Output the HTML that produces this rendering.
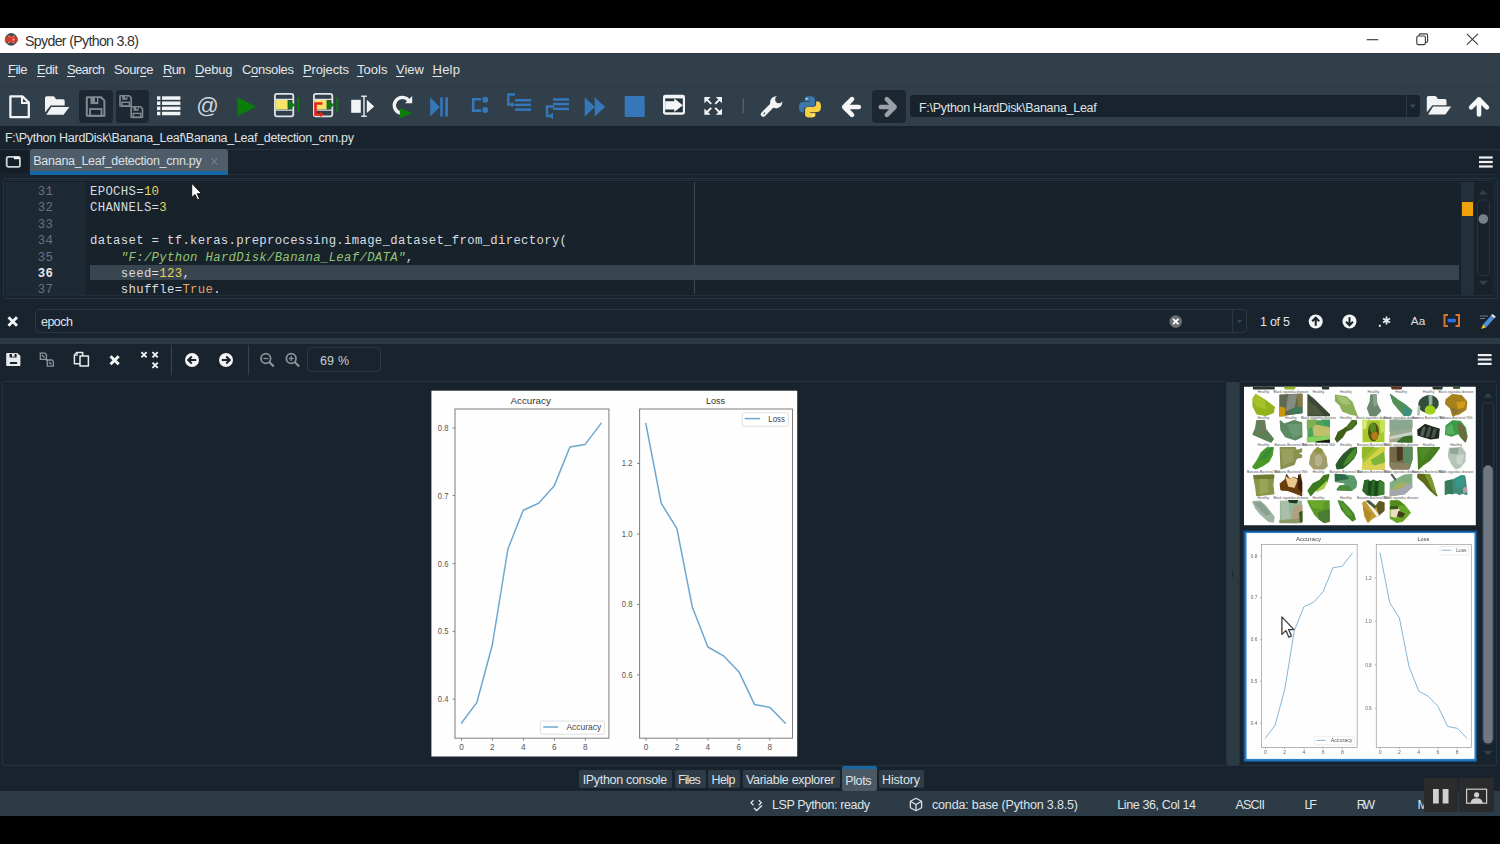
<!DOCTYPE html>
<html>
<head>
<meta charset="utf-8">
<title>Spyder (Python 3.8)</title>
<style>
*{box-sizing:border-box;margin:0;padding:0}
html,body{width:1500px;height:844px;overflow:hidden;background:#000}
body{font-family:"Liberation Sans",sans-serif;position:relative}
.b{position:absolute}
.tx{position:absolute;white-space:pre}
.tx u{text-decoration:underline;text-decoration-thickness:1px;text-underline-offset:1.5px}
.ln{position:absolute;left:20px;width:33px;text-align:right;font-family:"Liberation Mono",monospace;font-size:12.3px;line-height:16px;color:#66737e;white-space:pre;letter-spacing:0.2px}
.cl{position:absolute;left:90px;font-family:"Liberation Mono",monospace;font-size:12.3px;line-height:16px;white-space:pre;letter-spacing:0.319px}
#ov{position:absolute;left:0;top:0;width:1500px;height:844px}
</style>
</head>
<body>
<!-- window -->
<div class="b" style="left:0;top:28px;width:1500px;height:788px;background:#19232d"></div>
<div class="b" id="titlebar" style="left:0;top:28px;width:1500px;height:25.2px;background:#fff"></div>
<div class="b" id="menubar" style="left:0;top:53.2px;width:1500px;height:32.8px;background:#303f49;border-top:1.5px solid #2c3741"></div>
<div class="b" id="toolbar" style="left:0;top:86px;width:1500px;height:40px;background:#303f49;border-top:1px solid #2a3842"></div>
<!-- disabled btn backgrounds -->
<div class="b" style="left:79px;top:89.5px;width:33.5px;height:33.5px;background:#1c2731;border-radius:4px"></div>
<div class="b" style="left:115.5px;top:89.5px;width:33.5px;height:33.5px;background:#1c2731;border-radius:4px"></div>
<div class="b" style="left:872px;top:89.5px;width:34px;height:33.5px;background:#1c2731;border-radius:4px"></div>
<!-- cwd combobox -->
<div class="b" style="left:909.5px;top:94.5px;width:510px;height:22.5px;background:#19232d;border-radius:3px"></div>
<div class="b" style="left:1406px;top:95px;width:1px;height:21.5px;background:#2b3944"></div>
<!-- tab bar -->
<div class="b" style="left:0;top:148.5px;width:1500px;height:1px;background:#26333e"></div>
<div class="b" style="left:0;top:150px;width:28px;height:22.5px;background:#151e27;border-radius:4px"></div>
<div class="b" style="left:228px;top:173.500px;width:1270px;height:1px;background:#222e38"></div>
<div class="b" id="tab" style="left:29.600px;top:149px;width:198.700px;height:25.800px;background:#4e5d69;border-bottom:4.300px solid #1566a4;border-radius:3px 3px 0 0"></div>
<!-- editor -->
<div class="b" style="left:2.5px;top:177.5px;width:1495px;height:121px;border:1px solid #273540;border-radius:3px"></div>
<div class="b" style="left:5.5px;top:180px;width:1489px;height:116px;border:1px solid #212d38;border-radius:3px;background:#18222b"></div>
<div class="b" style="left:7px;top:181.5px;width:79px;height:113px;background:#1d2933"></div>
<div class="b" style="left:90px;top:264.5px;width:1368.5px;height:15.5px;background:#39454e"></div>
<div class="b" style="left:694px;top:182px;width:1px;height:112px;background:#3a4751"></div>
<div class="b" style="left:1460.5px;top:181.5px;width:13.5px;height:113px;background:#232f39"></div>
<div class="b" style="left:1462px;top:201.5px;width:11px;height:14px;background:#f0a20c"></div>
<div class="ln" style="top:183.7px;">31</div><div class="cl" style="top:183.7px"><span style="color:#d9dde0;">EPOCHS=</span><span style="color:#e6d35a;">10</span></div>
<div class="ln" style="top:200.1px;">32</div><div class="cl" style="top:200.1px"><span style="color:#d9dde0;">CHANNELS=</span><span style="color:#e6d35a;">3</span></div>
<div class="ln" style="top:216.6px;">33</div>
<div class="ln" style="top:233.0px;">34</div><div class="cl" style="top:233.0px"><span style="color:#d9dde0;">dataset = tf.keras.preprocessing.image_dataset_from_directory(</span></div>
<div class="ln" style="top:249.5px;">35</div><div class="cl" style="top:249.5px"><span style="color:#d9dde0;">    </span><span style="color:#93c572;font-style:italic;">"F:/Python HardDisk/Banana_Leaf/DATA"</span><span style="color:#d9dde0;">,</span></div>
<div class="ln" style="top:265.9px;color:#e4e7e9;font-weight:700;">36</div><div class="cl" style="top:265.9px"><span style="color:#d9dde0;">    seed=</span><span style="color:#e6d35a;">123</span><span style="color:#d9dde0;">,</span></div>
<div class="ln" style="top:282.4px;">37</div><div class="cl" style="top:282.4px"><span style="color:#d9dde0;">    shuffle=</span><span style="color:#e2a463;">True</span><span style="color:#d9dde0;">.</span></div>

<!-- find bar -->
<div class="b" style="left:34.5px;top:309px;width:1212.5px;height:24px;border:1px solid #2a3843;border-radius:4px;background:#19232d"></div>
<div class="b" style="left:1232px;top:310px;width:1px;height:22px;background:#2a3843"></div>
<!-- splitter -->
<div class="b" style="left:0;top:337.5px;width:1500px;height:6px;background:#2b3944"></div>
<!-- plots toolbar -->
<div class="b" style="left:306.5px;top:347.2px;width:74.3px;height:24.6px;border:1px solid #2a3843;border-radius:4px;background:#19232d"></div>
<div class="b" style="left:170.5px;top:345px;width:1px;height:30px;background:#34434e"></div>
<div class="b" style="left:247.5px;top:345px;width:1px;height:30px;background:#34434e"></div>
<!-- plot pane -->
<div class="b" style="left:1.5px;top:381px;width:1225.500px;height:384.5px;border:1px solid #26333e;border-radius:3px"></div>
<div class="b" style="left:1226.500px;top:382px;width:12px;height:383.500px;background:#2c3a44"></div>
<div class="b" style="left:1239px;top:381px;width:258px;height:384.5px;border:1px solid #26333e;border-radius:3px"></div>
<!-- bottom tabs -->
<div class="b" style="left:579px;top:769.5px;width:92.5px;height:18px;background:#2f3d48;border-radius:2px"></div>
<div class="b" style="left:674.5px;top:769.5px;width:31px;height:18px;background:#2f3d48;border-radius:2px"></div>
<div class="b" style="left:708px;top:769.5px;width:31.5px;height:18px;background:#2f3d48;border-radius:2px"></div>
<div class="b" style="left:742.5px;top:769.5px;width:97px;height:18px;background:#2f3d48;border-radius:2px"></div>
<div class="b" style="left:842px;top:766px;width:35px;height:25px;background:#4a5964;border-top:3px solid #1868a6;border-radius:2px"></div>
<div class="b" style="left:878.5px;top:769.5px;width:45.5px;height:18px;background:#2f3d48;border-radius:2px"></div>
<!-- status bar -->
<div class="b" id="statusbar" style="left:0;top:791px;width:1500px;height:25px;background:#2d3b46"></div>
<div class="tx" style="left:25.0px;top:33.98px;font-size:14.2px;line-height:14.2px;letter-spacing:-0.677px;color:#333333;font-family:'Liberation Sans';font-weight:400;font-style:normal">Spyder (Python 3.8)</div>
<div class="tx" style="left:8.0px;top:63.30px;font-size:13px;line-height:13px;letter-spacing:-0.484px;color:#e3e7ea;font-family:'Liberation Sans';font-weight:400;font-style:normal"><u>F</u>ile</div>
<div class="tx" style="left:37.0px;top:63.30px;font-size:13px;line-height:13px;letter-spacing:-0.469px;color:#e3e7ea;font-family:'Liberation Sans';font-weight:400;font-style:normal"><u>E</u>dit</div>
<div class="tx" style="left:67.0px;top:63.30px;font-size:13px;line-height:13px;letter-spacing:-0.641px;color:#e3e7ea;font-family:'Liberation Sans';font-weight:400;font-style:normal"><u>S</u>earch</div>
<div class="tx" style="left:114.0px;top:63.30px;font-size:13px;line-height:13px;letter-spacing:-0.341px;color:#e3e7ea;font-family:'Liberation Sans';font-weight:400;font-style:normal">Sour<u>c</u>e</div>
<div class="tx" style="left:163.0px;top:63.30px;font-size:13px;line-height:13px;letter-spacing:-0.680px;color:#e3e7ea;font-family:'Liberation Sans';font-weight:400;font-style:normal"><u>R</u>un</div>
<div class="tx" style="left:195.0px;top:63.30px;font-size:13px;line-height:13px;letter-spacing:-0.203px;color:#e3e7ea;font-family:'Liberation Sans';font-weight:400;font-style:normal"><u>D</u>ebug</div>
<div class="tx" style="left:242.0px;top:63.30px;font-size:13px;line-height:13px;letter-spacing:-0.315px;color:#e3e7ea;font-family:'Liberation Sans';font-weight:400;font-style:normal">C<u>o</u>nsoles</div>
<div class="tx" style="left:303.0px;top:63.30px;font-size:13px;line-height:13px;letter-spacing:-0.138px;color:#e3e7ea;font-family:'Liberation Sans';font-weight:400;font-style:normal"><u>P</u>rojects</div>
<div class="tx" style="left:357.0px;top:63.30px;font-size:13px;line-height:13px;letter-spacing:0.035px;color:#e3e7ea;font-family:'Liberation Sans';font-weight:400;font-style:normal"><u>T</u>ools</div>
<div class="tx" style="left:396.0px;top:63.30px;font-size:13px;line-height:13px;letter-spacing:0.016px;color:#e3e7ea;font-family:'Liberation Sans';font-weight:400;font-style:normal"><u>V</u>iew</div>
<div class="tx" style="left:432.5px;top:63.30px;font-size:13px;line-height:13px;letter-spacing:0.250px;color:#e3e7ea;font-family:'Liberation Sans';font-weight:400;font-style:normal"><u>H</u>elp</div>
<div class="tx" style="left:919.0px;top:101.72px;font-size:12.5px;line-height:12.5px;letter-spacing:-0.294px;color:#dfe3e6;font-family:'Liberation Sans';font-weight:400;font-style:normal">F:\Python HardDisk\Banana_Leaf</div>
<div class="tx" style="left:5.0px;top:132.12px;font-size:12.5px;line-height:12.5px;letter-spacing:-0.285px;color:#dfe3e6;font-family:'Liberation Sans';font-weight:400;font-style:normal">F:\Python HardDisk\Banana_Leaf\Banana_Leaf_detection_cnn.py</div>
<div class="tx" style="left:33.3px;top:155.02px;font-size:12.5px;line-height:12.5px;letter-spacing:-0.276px;color:#dde1e4;font-family:'Liberation Sans';font-weight:400;font-style:normal">Banana_Leaf_detection_cnn.py</div>
<div class="tx" style="left:41.0px;top:316.42px;font-size:12.5px;line-height:12.5px;letter-spacing:-0.516px;color:#dfe3e6;font-family:'Liberation Sans';font-weight:400;font-style:normal">epoch</div>
<div class="tx" style="left:1260.0px;top:316.32px;font-size:12.5px;line-height:12.5px;letter-spacing:-0.256px;color:#dfe3e6;font-family:'Liberation Sans';font-weight:400;font-style:normal">1 of 5</div>
<div class="tx" style="left:320.0px;top:355.42px;font-size:12.5px;line-height:12.5px;letter-spacing:0.167px;color:#c9ced2;font-family:'Liberation Sans';font-weight:400;font-style:normal">69 %</div>
<div class="tx" style="left:582.7px;top:773.52px;font-size:12.5px;line-height:12.5px;letter-spacing:-0.318px;color:#dfe3e6;font-family:'Liberation Sans';font-weight:400;font-style:normal">IPython console</div>
<div class="tx" style="left:677.9px;top:773.52px;font-size:12.5px;line-height:12.5px;letter-spacing:-0.877px;color:#dfe3e6;font-family:'Liberation Sans';font-weight:400;font-style:normal">Files</div>
<div class="tx" style="left:711.5px;top:773.52px;font-size:12.5px;line-height:12.5px;letter-spacing:-0.573px;color:#dfe3e6;font-family:'Liberation Sans';font-weight:400;font-style:normal">Help</div>
<div class="tx" style="left:746.0px;top:773.52px;font-size:12.5px;line-height:12.5px;letter-spacing:-0.305px;color:#dfe3e6;font-family:'Liberation Sans';font-weight:400;font-style:normal">Variable explorer</div>
<div class="tx" style="left:882.0px;top:773.52px;font-size:12.5px;line-height:12.5px;letter-spacing:-0.151px;color:#dfe3e6;font-family:'Liberation Sans';font-weight:400;font-style:normal">History</div>
<div class="tx" style="left:845.3px;top:774.82px;font-size:12.5px;line-height:12.5px;letter-spacing:-0.399px;color:#dfe3e6;font-family:'Liberation Sans';font-weight:400;font-style:normal">Plots</div>
<div class="tx" style="left:772.0px;top:798.62px;font-size:12.5px;line-height:12.5px;letter-spacing:-0.376px;color:#dfe3e6;font-family:'Liberation Sans';font-weight:400;font-style:normal">LSP Python: ready</div>
<div class="tx" style="left:932.0px;top:798.62px;font-size:12.5px;line-height:12.5px;letter-spacing:-0.164px;color:#dfe3e6;font-family:'Liberation Sans';font-weight:400;font-style:normal">conda: base (Python 3.8.5)</div>
<div class="tx" style="left:1117.3px;top:798.62px;font-size:12.5px;line-height:12.5px;letter-spacing:-0.385px;color:#dfe3e6;font-family:'Liberation Sans';font-weight:400;font-style:normal">Line 36, Col 14</div>
<div class="tx" style="left:1235.5px;top:798.62px;font-size:12.5px;line-height:12.5px;letter-spacing:-0.789px;color:#dfe3e6;font-family:'Liberation Sans';font-weight:400;font-style:normal">ASCII</div>
<div class="tx" style="left:1304.6px;top:798.62px;font-size:12.5px;line-height:12.5px;letter-spacing:-2.194px;color:#dfe3e6;font-family:'Liberation Sans';font-weight:400;font-style:normal">LF</div>
<div class="tx" style="left:1356.7px;top:798.62px;font-size:12.5px;line-height:12.5px;letter-spacing:-2.309px;color:#dfe3e6;font-family:'Liberation Sans';font-weight:400;font-style:normal">RW</div>
<div class="tx" style="left:1417.4px;top:798.62px;font-size:12.5px;line-height:12.5px;letter-spacing:-0.822px;color:#dfe3e6;font-family:'Liberation Sans';font-weight:400;font-style:normal">M</div>

<!-- recorder overlay -->
<div class="b" style="left:1423.5px;top:778px;width:34px;height:33.5px;background:#2a2b2c"></div>
<div class="b" style="left:1459px;top:778px;width:35px;height:33.5px;background:#2a2b2c"></div>
<svg id="ov" width="1500" height="844" viewBox="0 0 1500 844">
<g id="logo"><circle cx="11.2" cy="39.4" r="6.3" fill="#474c4f"/><path d="M5 37.2 Q11 34.2 17.6 37.4 L18 41 Q11.5 44.5 4.8 41.5Z" fill="#d23a2e"/><circle cx="13.4" cy="39.6" r="1.1" fill="#f6b0a6"/><path d="M8 35.5l2 2M14.5 35.3l-2 2M8 43.5l2-2M14.5 43.6l-2-2" stroke="#ddd" stroke-width=".8"/></g>
<g id="wincontrols" stroke="#3c3c3c" stroke-width="1.15" fill="none"><path d="M1366.7 39.7H1378.2"/><rect x="1416.8" y="36" width="8.6" height="8.6" rx="1.6"/><path d="M1419 36V35.3Q1419 33.9 1420.4 33.9H1426Q1427.6 33.9 1427.6 35.5V41Q1427.6 42.4 1426.2 42.4H1425.4"/><path d="M1466.9 33.9L1477.9 44.7M1477.9 33.9L1466.9 44.7"/></g>
<path d="M10.4 96.3H22.4L28.8 102.6V117.2H10.4Z" fill="none" stroke="#f1f3f4" stroke-width="2.3" stroke-linejoin="round"/><path d="M22 96.5V103H28.6" fill="none" stroke="#f1f3f4" stroke-width="2"/>
<path d="M45 98Q45 96.3 46.7 96.3H53Q54.2 96.3 54.9 97.4L56 99.3H63Q64.7 99.3 64.7 101V105.5H50.6L45 112.5Z" fill="#f1f3f4"/><path d="M46.3 114.8L51.3 106.9H69.4L63.6 114.8Z" fill="#f1f3f4"/>
<path d="M86.8 97.3H101.1L104.4 100.6V115.8H86.8Z" fill="none" stroke="#7f8a92" stroke-width="2.0" stroke-linejoin="round"/><rect x="90.5" y="97.3" width="7.8" height="6.8" fill="#7f8a92"/><rect x="95.0" y="97.9" width="2.0" height="4.1" fill="#1c2731"/><rect x="90.1" y="109.0" width="11.4" height="7.0" fill="none" stroke="#7f8a92" stroke-width="1.8"/>
<path d="M120.0 95.8H129.2L131.2 97.8V106.0H120.0Z" fill="none" stroke="#7f8a92" stroke-width="1.6" stroke-linejoin="round"/><rect x="122.3" y="95.8" width="5.1" height="3.9" fill="#7f8a92"/><rect x="125.2" y="95.9" width="1.3" height="2.4" fill="#1c2731"/><rect x="122.0" y="102.3" width="7.4" height="4.0" fill="none" stroke="#7f8a92" stroke-width="1.4"/>
<path d="M131.2 106.8H140.5L142.5 108.8V117.2H131.2Z" fill="none" stroke="#7f8a92" stroke-width="1.6" stroke-linejoin="round"/><rect x="133.5" y="106.8" width="5.2" height="4.0" fill="#7f8a92"/><rect x="136.5" y="107.0" width="1.3" height="2.4" fill="#1c2731"/><rect x="133.2" y="113.4" width="7.5" height="4.1" fill="none" stroke="#7f8a92" stroke-width="1.4"/>
<rect x="157" y="96.30" width="3.4" height="3.5" fill="#f1f3f4"/><rect x="162" y="96.30" width="18.4" height="3.5" fill="#f1f3f4"/>
<rect x="157" y="101.45" width="3.4" height="3.5" fill="#f1f3f4"/><rect x="162" y="101.45" width="18.4" height="3.5" fill="#f1f3f4"/>
<rect x="157" y="106.60" width="3.4" height="3.5" fill="#f1f3f4"/><rect x="162" y="106.60" width="18.4" height="3.5" fill="#f1f3f4"/>
<rect x="157" y="111.75" width="3.4" height="3.5" fill="#f1f3f4"/><rect x="162" y="111.75" width="18.4" height="3.5" fill="#f1f3f4"/>
<text x="196.2" y="113.3" font-family="Liberation Sans" font-size="22.5" fill="#cfd6da" textLength="22.5" lengthAdjust="spacingAndGlyphs">@</text>
<path d="M237.5 97V116.3L256 106.7Z" fill="#0b7d0b"/>
<rect x="274.9" y="93.9" width="18.4" height="22.4" rx="2" fill="none" stroke="#dfe3e6" stroke-width="1.8"/><path d="M275.0 99.300H293.0M275.0 110.200H293.0" stroke="#dfe3e6" stroke-width="1.200"/><rect x="275.8" y="100" width="11.8" height="9.3" fill="#f5e56a"/><path d="M288.3 100V110L295.5 105Z" fill="#0b7d0b"/><rect x="297.3" y="97.5" width="1.8" height="15" fill="#0b7d0b"/>
<rect x="313.9" y="93.9" width="18.4" height="22.4" rx="2" fill="none" stroke="#dfe3e6" stroke-width="1.8"/><path d="M314.0 99.300H332.0M314.0 110.200H332.0" stroke="#dfe3e6" stroke-width="1.200"/><rect x="314.8" y="100" width="11.8" height="9.3" fill="#f5e56a"/><path d="M327.3 100V110L334.5 105Z" fill="#0b7d0b"/><rect x="336.3" y="97.5" width="1.8" height="15" fill="#0b7d0b"/>
<path d="M322.5 103.5H315.5V114.5H321.5" fill="none" stroke="#f0231a" stroke-width="2.6"/><path d="M320.5 111.5L323.5 114.5L320.5 117.5Z" fill="#f0231a"/>
<rect x="351.2" y="99.8" width="9.6" height="13" fill="#f1f3f4"/><path d="M364 96.3H361.2M364 96.3H366.8M364 96.3V116.3M361.2 116.3H366.8" stroke="#dfe3e6" stroke-width="1.5" fill="none"/><path d="M366.8 99.8V113L374.2 106.4Z" fill="#f1f3f4"/>
<path d="M400.5 113.2A8 8 0 1 1 409.2 101.3" fill="none" stroke="#f1f3f4" stroke-width="3.400"/><path d="M405 103.2H412.2V96Z" fill="#f1f3f4"/><path d="M399.8 108V118.3L412.8 113.2Z" fill="#0b7d0b"/>
<path d="M430.2 97.3V116.5L439.8 106.9Z" fill="#3577b8"/><rect x="440.2" y="97.3" width="2.6" height="19.2" fill="#3577b8"/><rect x="445.2" y="97.3" width="2.8" height="19.2" fill="#3577b8"/>
<path d="M481 99.2H473.2V110.6H481" fill="none" stroke="#3577b8" stroke-width="2.6"/><circle cx="485.3" cy="99.8" r="3" fill="#3577b8"/><circle cx="485.3" cy="110" r="3" fill="#3577b8"/>
<path d="M515 94.5H508.3V104.5H513" fill="none" stroke="#3577b8" stroke-width="2.4"/><path d="M511.5 101.5L515 104.5L511.5 107.5Z" fill="#3577b8"/>
<rect x="515" y="99" width="16" height="2.5" fill="#3577b8"/>
<rect x="515" y="103.6" width="16" height="2.5" fill="#3577b8"/>
<rect x="515" y="108.4" width="16" height="2.5" fill="#3577b8"/>
<path d="M554 106.5H547V116H552" fill="none" stroke="#3577b8" stroke-width="2.4"/><path d="M551 112.5L546.8 116L551 119.2Z" fill="#3577b8" transform="translate(2,0)"/>
<rect x="553" y="98.2" width="16" height="2.5" fill="#3577b8"/>
<rect x="553" y="102.8" width="16" height="2.5" fill="#3577b8"/>
<rect x="553" y="107.6" width="16" height="2.5" fill="#3577b8"/>
<path d="M584.7 97.2V116.6L595 106.9ZM594.7 97.2V116.6L605.2 106.9Z" fill="#3577b8"/>
<rect x="624.7" y="96" width="20" height="21" rx="1" fill="#3577b8"/>
<rect x="663" y="94.7" width="22" height="20" rx="2.4" fill="#f2f4f5"/><rect x="665.2" y="98.4" width="17.6" height="13.900" fill="#26343e"/><path d="M665.2 101.200H674.300V98.600L682.800 105.350L674.300 112.100V109.500H665.2Z" fill="#f6f7f8"/>
<path d="M704.4 97.1H710.6L704.4 103.3Z" fill="#f1f3f4"/><path d="M711.2 103.9L706.9 99.6" stroke="#f1f3f4" stroke-width="2"/>
<path d="M722.0 97.1H715.8L722.0 103.3Z" fill="#f1f3f4"/><path d="M715.2 103.9L719.5 99.6" stroke="#f1f3f4" stroke-width="2"/>
<path d="M704.4 114.7H710.6L704.4 108.5Z" fill="#f1f3f4"/><path d="M711.2 107.9L706.9 112.2" stroke="#f1f3f4" stroke-width="2"/>
<path d="M722.0 114.7H715.8L722.0 108.5Z" fill="#f1f3f4"/><path d="M715.2 107.9L719.5 112.2" stroke="#f1f3f4" stroke-width="2"/>
<rect x="742.6" y="98.5" width="1.2" height="14.5" fill="#5a6873"/>
<path d="M763.300 114.200L773.500 104" stroke="#f1f3f4" stroke-width="5" stroke-linecap="round"/><circle cx="776.200" cy="102.300" r="6.100" fill="#f1f3f4"/><circle cx="778.900" cy="99.500" r="3.700" fill="#303f49"/><circle cx="764.300" cy="113.300" r="0.850" fill="#303f49"/>
<g id="py"><path d="M809.6 96.3c-5.4 0-5 2.3-5 2.3v2.6h5.2v.8h-7.3s-3.5-.4-3.5 5.1 3 5.3 3 5.3h1.9v-2.6s-.1-3 3-3h5.100c0 0 2.900 0 2.900-2.800v-4.800s.4-2.900-5.300-2.900z" fill="#3b77a9"/><circle cx="806.7" cy="98.700" r=".95" fill="#dfe9f0"/><path d="M810.4 117.600c5.400 0 5-2.300 5-2.300v-2.600h-5.200v-.8h7.300s3.500.4 3.500-5.100-3-5.300-3-5.300h-1.900v2.600s.1 3-3 3h-5.100s-2.900 0-2.900 2.800v4.800s-.4 2.900 5.300 2.900z" fill="#f6cf46"/><circle cx="813.3" cy="115.200" r=".95" fill="#fdf5d6"/></g>
<path d="M858.800 107H844.200M852 99.200L844.200 107L852 114.800" fill="none" stroke="#f6f7f8" stroke-width="4.600" stroke-linecap="round" stroke-linejoin="round"/>
<path d="M880.800 107H894.600M886.800 99.200L894.600 107L886.800 114.800" fill="none" stroke="#9ba1a6" stroke-width="4.600" stroke-linecap="round" stroke-linejoin="round"/>
<path d="M1409.700 104.500h6.200l-3.100 3.600z" fill="#3d4b56"/>
<g transform="translate(1381.8,-0.3)"><path d="M45 98Q45 96.3 46.7 96.3H53Q54.2 96.3 54.9 97.400L56 99.300H63Q64.700 99.300 64.700 101V105.500H50.600L45 112.500Z" fill="#f1f3f4"/><path d="M46.300 114.800L51.300 106.900H69.400L63.600 114.800Z" fill="#f1f3f4"/></g>
<path d="M1479 114.400V99.400M1471.100 107.300L1479 99.400L1486.900 107.300" fill="none" stroke="#f6f7f8" stroke-width="4.600" stroke-linecap="round" stroke-linejoin="round"/>
<rect x="6.700" y="156.900" width="13.200" height="10" rx="1.600" fill="none" stroke="#cdd4d9" stroke-width="1.800"/><rect x="13.900" y="156.900" width="5.800" height="2.300" fill="#f4f6f7"/>
<path d="M211.300 158.200L217.300 164.800M217.300 158.200L211.300 164.800" stroke="#6f7e89" stroke-width="1.200"/>
<rect x="1479" y="156.4" width="13.700" height="2.200" fill="#eef0f2"/>
<rect x="1479" y="160.9" width="13.700" height="2.200" fill="#eef0f2"/>
<rect x="1479" y="165.4" width="13.700" height="2.200" fill="#eef0f2"/>
<path d="M1478.800 194.500L1483.200 190L1487.600 194.500Z" fill="#33414c"/><path d="M1478.800 280.800L1483.200 285.300L1487.600 280.800Z" fill="#33414c"/>
<rect x="1477.300" y="199.800" width="12" height="76" rx="5" fill="none" stroke="#2b3843" stroke-width="1"/>
<circle cx="1483.300" cy="219" r="4.800" fill="#76818a"/>
<path d="M191.7 183.2L191.7 197.6L195.0 194.5L197.5 199.9L199.6 199.0L197.2 193.7L201.7 193.7Z" fill="#fff" stroke="#111" stroke-width="1.0" stroke-linejoin="round"/>
<path d="M8.500 317.200L17 325.700M17 317.200L8.500 325.700" stroke="#f2f4f5" stroke-width="2.900"/>
<circle cx="1175.700" cy="321.500" r="6.300" fill="#6a6f73"/><path d="M1173 318.800L1178.400 324.200M1178.400 318.800L1173 324.200" stroke="#fff" stroke-width="1.700"/>
<path d="M1236.700 320h5.600l-2.800 3.200z" fill="#35434e"/>
<circle cx="1315.7" cy="321.5" r="7.0" fill="#f4f5f6"/><path d="M1315.7 325.7V318.2M1312.2 321.3L1315.7 317.7L1319.2 321.3" stroke="#19232d" stroke-width="2" fill="none"/>
<circle cx="1349.5" cy="321.5" r="7.0" fill="#f4f5f6"/><path d="M1349.5 317.3V324.8M1346.0 321.7L1349.5 325.3L1353.0 321.7" stroke="#19232d" stroke-width="2" fill="none"/>
<rect x="1378.800" y="324.800" width="2" height="2" fill="#e8ebed"/><path d="M1386.500 316.500V324.500M1383 318.500L1390 322.500M1390 318.500L1383 322.500" stroke="#e8ebed" stroke-width="1.700"/>
<text x="1410.800" y="325.200" font-family="Liberation Sans" font-size="11.500" fill="#dfe3e6" textLength="14.400" lengthAdjust="spacingAndGlyphs">Aa</text>
<path d="M1448 315H1444.500V326H1448M1455.500 315H1459V326H1455.500" fill="none" stroke="#d9742f" stroke-width="2"/><rect x="1447.500" y="318.700" width="8.500" height="3.600" rx="1" fill="#2f6fe0"/>
<g><path d="M1480 316h8M1480 318.500h5" stroke="#6d7a85" stroke-width="1"/><path d="M1483 324.500L1491 315.500L1494.300 318.300L1486.300 327.300Z" fill="#4f8fdc"/><path d="M1483 324.500L1486.300 327.300L1481.200 329Z" fill="#f2c230"/><path d="M1491 315.500L1492.500 314L1495.800 316.800L1494.300 318.300Z" fill="#e9eef2"/></g>
<path d="M6.200 353.800Q6.200 353 7 353H17.300L20.400 356.100V365.300Q20.400 366.100 19.600 366.100H7Q6.200 366.100 6.200 365.300Z" fill="#e8ebed"/><rect x="9.600" y="353.900" width="7" height="3.600" fill="#19232d"/><rect x="12" y="353.900" width="2.600" height="2.800" fill="#e8ebed"/><rect x="9.800" y="362" width="7.400" height="1.900" rx=".6" fill="#19232d"/>
<g fill="none" stroke="#8a949b" stroke-width="1.300"><path d="M40.300 353.100H45L46.400 354.500V359.300H40.300Z"/><path d="M47.300 360H52L53.400 361.400V366.200H47.300Z"/><path d="M42 355l2.500 2.500M49 362l2.500 2.500"/></g><path d="M45.500 358.500L48 361" stroke="#8a949b" stroke-width="1.800"/>
<path d="M77 352.400H82.700V363.700H74.400V355Z" fill="#19232d" stroke="#e8ebed" stroke-width="1.500" stroke-linejoin="round"/><path d="M77.200 352.600V355.200H74.600" fill="none" stroke="#e8ebed" stroke-width="1.100"/><rect x="80" y="356" width="8.400" height="10" fill="#19232d" stroke="#e8ebed" stroke-width="1.500" stroke-linejoin="round"/>
<path d="M110.500 356.200L118.700 364.200M118.700 356.200L110.500 364.200" stroke="#f2f4f5" stroke-width="3"/>
<path d="M141.4 352.2L146.6 357.40000000000003M146.6 352.2L141.4 357.40000000000003" stroke="#f2f4f5" stroke-width="1.900"/>
<path d="M152.5 352.2L157.7 357.40000000000003M157.7 352.2L152.5 357.40000000000003" stroke="#f2f4f5" stroke-width="1.900"/>
<path d="M152.5 362.7L157.7 367.90000000000003M157.7 362.7L152.5 367.90000000000003" stroke="#f2f4f5" stroke-width="1.900"/>
<circle cx="192" cy="360" r="7.0" fill="#f4f5f6"/><path d="M196.2 360H188.7M191.8 356.5L188.2 360L191.8 363.5" stroke="#19232d" stroke-width="2" fill="none"/>
<circle cx="226" cy="360" r="7.0" fill="#f4f5f6"/><path d="M221.8 360H229.3M226.2 356.5L229.8 360L226.2 363.5" stroke="#19232d" stroke-width="2" fill="none"/>
<circle cx="265.8" cy="358.5" r="4.800" fill="none" stroke="#8a949b" stroke-width="1.700"/><path d="M269.3 362.0L273.8 366.5" stroke="#8a949b" stroke-width="2.200"/><path d="M263.40000000000003 358.5H268.2" stroke="#8a949b" stroke-width="1.300"/>
<circle cx="291.2" cy="358.5" r="4.800" fill="none" stroke="#8a949b" stroke-width="1.700"/><path d="M294.7 362.0L299.2 366.5" stroke="#8a949b" stroke-width="2.200"/><path d="M288.8 358.5H293.59999999999997" stroke="#8a949b" stroke-width="1.300"/><path d="M291.2 356.1V360.9" stroke="#8a949b" stroke-width="1.300"/>
<rect x="1477.800" y="354.0" width="13.800" height="2.200" fill="#eef0f2"/>
<rect x="1477.800" y="358.4" width="13.800" height="2.200" fill="#eef0f2"/>
<rect x="1477.800" y="362.8" width="13.800" height="2.200" fill="#eef0f2"/>
<path d="M753.500 800.300L751 802.800L753.500 805.300M758.800 800.300L761.300 802.800L758.800 805.300" fill="none" stroke="#dfe3e6" stroke-width="1.300"/><path d="M754 808L756.600 810.600L762 805.600" fill="none" stroke="#dfe3e6" stroke-width="1.400"/>
<g fill="none" stroke="#dfe3e6" stroke-width="1.300" stroke-linejoin="round"><path d="M916 798.300L921.600 801.300V807.700L916 810.700L910.400 807.700V801.300Z"/><path d="M910.600 801.500L916 804.500L921.400 801.500M916 804.500V810.500"/></g>
<rect x="1433" y="789" width="5.800" height="14.500" fill="#cfcfcf"/><rect x="1442.700" y="789" width="5.800" height="14.500" fill="#cfcfcf"/>
<rect x="1466.600" y="789.200" width="20" height="14" fill="none" stroke="#cfcfcf" stroke-width="1.200"/><circle cx="1476.600" cy="794.800" r="2.600" fill="#cfcfcf"/><path d="M1470.600 803.200Q1470.600 798.200 1476.600 798.200Q1482.600 798.200 1482.600 803.200Z" fill="#cfcfcf"/>
<defs><g id="fig"><rect x="431.4" y="390.7" width="365.8" height="365.8" fill="#fefefe"/>
<rect x="455" y="409" width="153.9" height="329.2" fill="none" stroke="#7d7d7d" stroke-width="1"/>
<rect x="639.6" y="409" width="152.9" height="329.2" fill="none" stroke="#7d7d7d" stroke-width="1"/>
<polyline points="461.5,723.0 476.8,702.6 492.3,645.0 507.9,549.0 523.2,510.3 538.6,503.2 554.1,486.1 569.9,447.0 585.0,444.6 601.1,423.4" fill="none" stroke="#6ea7ce" stroke-width="1.5" stroke-linejoin="round" stroke-linecap="round"/>
<polyline points="645.8,423.4 661.2,503.2 676.9,528.6 692.2,606.7 707.9,647.0 723.5,655.8 739.0,671.9 754.5,704.4 770.0,707.4 785.4,723.3" fill="none" stroke="#6ea7ce" stroke-width="1.5" stroke-linejoin="round" stroke-linecap="round"/>
<text x="510.5" y="404.2" font-family="Liberation Sans" font-size="9.600" fill="#333" textLength="40.3" lengthAdjust="spacingAndGlyphs">Accuracy</text>
<text x="706" y="404.2" font-family="Liberation Sans" font-size="9.600" fill="#333" textLength="19" lengthAdjust="spacingAndGlyphs">Loss</text>
<path d="M452.6 428H455" stroke="#7d7d7d" stroke-width="1"/>
<text x="437.8" y="430.9" font-family="Liberation Sans" font-size="8.200" fill="#555" textLength="10.6" lengthAdjust="spacingAndGlyphs">0.8</text>
<path d="M452.6 495.6H455" stroke="#7d7d7d" stroke-width="1"/>
<text x="437.8" y="498.5" font-family="Liberation Sans" font-size="8.200" fill="#555" textLength="10.6" lengthAdjust="spacingAndGlyphs">0.7</text>
<path d="M452.6 563.6H455" stroke="#7d7d7d" stroke-width="1"/>
<text x="437.8" y="566.5" font-family="Liberation Sans" font-size="8.200" fill="#555" textLength="10.6" lengthAdjust="spacingAndGlyphs">0.6</text>
<path d="M452.6 631.3H455" stroke="#7d7d7d" stroke-width="1"/>
<text x="437.8" y="634.1999999999999" font-family="Liberation Sans" font-size="8.200" fill="#555" textLength="10.6" lengthAdjust="spacingAndGlyphs">0.5</text>
<path d="M452.6 699.1H455" stroke="#7d7d7d" stroke-width="1"/>
<text x="437.8" y="702.0" font-family="Liberation Sans" font-size="8.200" fill="#555" textLength="10.6" lengthAdjust="spacingAndGlyphs">0.4</text>
<path d="M637.2 463.4H639.6" stroke="#7d7d7d" stroke-width="1"/>
<text x="621.8" y="466.29999999999995" font-family="Liberation Sans" font-size="8.200" fill="#555" textLength="10.6" lengthAdjust="spacingAndGlyphs">1.2</text>
<path d="M637.2 534H639.6" stroke="#7d7d7d" stroke-width="1"/>
<text x="621.8" y="536.9" font-family="Liberation Sans" font-size="8.200" fill="#555" textLength="10.6" lengthAdjust="spacingAndGlyphs">1.0</text>
<path d="M637.2 604.5H639.6" stroke="#7d7d7d" stroke-width="1"/>
<text x="621.8" y="607.4" font-family="Liberation Sans" font-size="8.200" fill="#555" textLength="10.6" lengthAdjust="spacingAndGlyphs">0.8</text>
<path d="M637.2 674.9H639.6" stroke="#7d7d7d" stroke-width="1"/>
<text x="621.8" y="677.8" font-family="Liberation Sans" font-size="8.200" fill="#555" textLength="10.6" lengthAdjust="spacingAndGlyphs">0.6</text>
<path d="M461.5 738.2V740.6" stroke="#7d7d7d" stroke-width="1"/>
<text x="461.5" y="749.7" font-family="Liberation Sans" font-size="8.2" fill="#555" text-anchor="middle">0</text>
<path d="M646.0 738.2V740.6" stroke="#7d7d7d" stroke-width="1"/>
<text x="646.0" y="749.7" font-family="Liberation Sans" font-size="8.2" fill="#555" text-anchor="middle">0</text>
<path d="M492.4 738.2V740.6" stroke="#7d7d7d" stroke-width="1"/>
<text x="492.4" y="749.7" font-family="Liberation Sans" font-size="8.2" fill="#555" text-anchor="middle">2</text>
<path d="M677.0 738.2V740.6" stroke="#7d7d7d" stroke-width="1"/>
<text x="677.0" y="749.7" font-family="Liberation Sans" font-size="8.2" fill="#555" text-anchor="middle">2</text>
<path d="M523.4 738.2V740.6" stroke="#7d7d7d" stroke-width="1"/>
<text x="523.4" y="749.7" font-family="Liberation Sans" font-size="8.2" fill="#555" text-anchor="middle">4</text>
<path d="M707.9 738.2V740.6" stroke="#7d7d7d" stroke-width="1"/>
<text x="707.9" y="749.7" font-family="Liberation Sans" font-size="8.2" fill="#555" text-anchor="middle">4</text>
<path d="M554.4 738.2V740.6" stroke="#7d7d7d" stroke-width="1"/>
<text x="554.4" y="749.7" font-family="Liberation Sans" font-size="8.2" fill="#555" text-anchor="middle">6</text>
<path d="M738.9 738.2V740.6" stroke="#7d7d7d" stroke-width="1"/>
<text x="738.9" y="749.7" font-family="Liberation Sans" font-size="8.2" fill="#555" text-anchor="middle">6</text>
<path d="M585.3 738.2V740.6" stroke="#7d7d7d" stroke-width="1"/>
<text x="585.3" y="749.7" font-family="Liberation Sans" font-size="8.2" fill="#555" text-anchor="middle">8</text>
<path d="M769.8 738.2V740.6" stroke="#7d7d7d" stroke-width="1"/>
<text x="769.8" y="749.7" font-family="Liberation Sans" font-size="8.2" fill="#555" text-anchor="middle">8</text>
<rect x="540.4" y="721" width="64" height="13.2" rx="1.2" fill="#fff" stroke="#d8d8d8" stroke-width=".8"/>
<path d="M543.2 727H558" stroke="#6ea7ce" stroke-width="1.5"/>
<text x="566.4" y="730" font-family="Liberation Sans" font-size="8.200" fill="#444" textLength="34.9" lengthAdjust="spacingAndGlyphs">Accuracy</text>
<rect x="742.2" y="412.7" width="46" height="13.5" rx="1.2" fill="#fff" stroke="#d8d8d8" stroke-width=".8"/>
<path d="M744.6 418.6H760" stroke="#6ea7ce" stroke-width="1.5"/>
<text x="768.3" y="421.7" font-family="Liberation Sans" font-size="8.200" fill="#444" textLength="16.6" lengthAdjust="spacingAndGlyphs">Loss</text></g></defs>
<use href="#fig"/>
<rect x="1243.400" y="530.600" width="233.800" height="231.500" rx="1" fill="#0f4b80"/><rect x="1244.700" y="531.800" width="231.300" height="229" fill="#2a80c8"/><rect x="1246.8" y="533.6" width="227.4" height="225" fill="#fff"/>
<filter id="soft2" x="-2%" y="-2%" width="104%" height="104%"><feGaussianBlur stdDeviation="0.35"/></filter>
<g filter="url(#soft2)" opacity="0.9"><rect x="1246.8" y="533.6" width="227.4" height="225" fill="#fff"/><g transform="translate(978.620,292.043) scale(0.62165,0.61673)"><use href="#fig"/></g></g>
<clipPath id="t1"><rect x="1244" y="386.7" width="231.8" height="138.5"/></clipPath>
<filter id="soft" x="-5%" y="-5%" width="110%" height="110%"><feGaussianBlur stdDeviation="0.45"/></filter>
<g clip-path="url(#t1)"><rect x="1240" y="380" width="240" height="150" fill="#fefefe"/><g filter="url(#soft)">
<polygon points="1253.5,384.9 1274.1,384.9 1274.1,389.0 1253.5,389.0" fill="#2c352c" stroke="#2c352c" stroke-width="1.2" stroke-linejoin="round"/>
<polygon points="1283.2,384.9 1296.4,384.9 1294.2,388.8 1285.4,388.8" fill="#8fb31e" stroke="#8fb31e" stroke-width="1.2" stroke-linejoin="round"/>
<polygon points="1321.7,384.9 1329.4,384.9 1328.3,389.0 1322.8,389.0" fill="#28322a" stroke="#28322a" stroke-width="1.2" stroke-linejoin="round"/>
<polygon points="1391.1,386.0 1402.1,386.0 1401.0,388.8 1392.2,388.8" fill="#5a2e18" stroke="#5a2e18" stroke-width="1.2" stroke-linejoin="round"/>
<polygon points="1432.4,384.9 1442.8,384.9 1441.7,389.0 1433.5,389.0" fill="#243226" stroke="#243226" stroke-width="1.2" stroke-linejoin="round"/>
<polygon points="1452.7,384.9 1460.4,384.9 1459.3,388.2 1453.8,388.2" fill="#2e4a22" stroke="#2e4a22" stroke-width="1.2" stroke-linejoin="round"/>
<polygon points="1253.0,398.9 1255.7,394.6 1265.6,400.6 1274.4,407.2 1273.3,412.7 1265.6,415.4 1256.8,413.8 1253.0,406.1" fill="#93b31c" stroke="#93b31c" stroke-width="1.2" stroke-linejoin="round"/>
<polygon points="1253.5,399.5 1256.2,395.6 1264.5,401.1 1265.6,408.3 1256.8,406.1" fill="#a6c22a" stroke="#a6c22a" stroke-width="1.2" stroke-linejoin="round"/>
<polygon points="1279.9,395.1 1301.9,394.0 1301.9,412.7 1279.9,416.0" fill="#5c6a52" stroke="#5c6a52" stroke-width="1.2" stroke-linejoin="round"/>
<polygon points="1279.9,407.2 1284.9,408.3 1284.3,416.0 1279.9,416.0" fill="#c9960f" stroke="#c9960f" stroke-width="1.2" stroke-linejoin="round"/>
<polygon points="1288.7,395.1 1296.4,394.6 1294.2,407.2 1286.5,410.5" fill="#838c7e" stroke="#838c7e" stroke-width="1.2" stroke-linejoin="round"/>
<polygon points="1297.5,395.1 1301.9,394.6 1301.9,407.2 1298.6,408.3" fill="#8a7a42" stroke="#8a7a42" stroke-width="1.2" stroke-linejoin="round"/>
<polygon points="1293.1,408.3 1301.9,407.2 1301.9,412.7 1292.0,413.8" fill="#3f7a5a" stroke="#3f7a5a" stroke-width="1.2" stroke-linejoin="round"/>
<polygon points="1308.0,394.6 1312.9,398.4 1329.4,414.4 1329.4,415.7 1308.0,415.7" fill="#3b4732" stroke="#3b4732" stroke-width="1.2" stroke-linejoin="round"/>
<polygon points="1308.5,401.7 1316.2,407.2 1322.8,414.9 1308.5,414.9" fill="#4d5a3c" stroke="#4d5a3c" stroke-width="1.2" stroke-linejoin="round"/>
<polygon points="1335.5,395.1 1346.0,396.8 1352.0,402.2 1354.2,408.3 1357.0,415.4 1349.3,413.8 1342.7,411.1 1339.9,405.0 1335.5,401.1" fill="#8bb058" stroke="#8bb058" stroke-width="1.2" stroke-linejoin="round"/>
<polygon points="1337.2,396.2 1346.0,398.4 1350.4,403.9 1342.7,403.9" fill="#a3c274" stroke="#a3c274" stroke-width="1.2" stroke-linejoin="round"/>
<polygon points="1370.7,395.1 1375.1,394.6 1376.8,403.9 1380.6,411.1 1376.2,415.7 1370.2,415.7 1367.4,408.3 1370.2,401.7" fill="#6b8a70" stroke="#6b8a70" stroke-width="1.2" stroke-linejoin="round"/>
<polygon points="1373.5,394.6 1376.2,394.6 1376.8,405.0 1374.0,406.1" fill="#88a08c" stroke="#88a08c" stroke-width="1.2" stroke-linejoin="round"/>
<polygon points="1390.5,394.6 1397.7,400.1 1404.8,404.4 1411.8,410.5 1410.3,414.9 1404.3,415.7 1398.8,409.4 1393.3,402.8" fill="#4f9058" stroke="#4f9058" stroke-width="1.2" stroke-linejoin="round"/>
<polygon points="1403.2,407.2 1411.5,411.1 1409.8,414.9 1404.3,415.4" fill="#3c8f80" stroke="#3c8f80" stroke-width="1.2" stroke-linejoin="round"/>
<ellipse cx="1428.5" cy="403.9" rx="10.4" ry="8.8" fill="#334f3a" transform="rotate(-15 1428.5 403.9)"/>
<polygon points="1418.1,407.2 1419.7,406.1 1419.2,414.9 1417.7,414.9" fill="#b8c4b0" stroke="#b8c4b0" stroke-width="1.2" stroke-linejoin="round"/>
<ellipse cx="1430.2" cy="409.9" rx="5.5" ry="4.6" fill="#a2d11a" transform="rotate(0 1430.2 409.9)"/>
<polygon points="1429.1,396.2 1431.8,395.6 1431.8,403.9 1429.6,405.0" fill="#9ab0a0" stroke="#9ab0a0" stroke-width="1.2" stroke-linejoin="round"/>
<polygon points="1446.1,399.5 1452.7,394.6 1461.5,395.6 1466.7,401.7 1465.9,409.4 1459.3,413.8 1452.7,415.7 1450.5,408.3 1445.6,403.9" fill="#a5801c" stroke="#a5801c" stroke-width="1.2" stroke-linejoin="round"/>
<polygon points="1457.1,402.8 1464.8,401.7 1463.7,407.2 1458.2,408.3" fill="#d59a14" stroke="#d59a14" stroke-width="1.2" stroke-linejoin="round"/>
<polygon points="1451.6,408.3 1459.3,410.5 1453.8,414.9" fill="#8a7430" stroke="#8a7430" stroke-width="1.2" stroke-linejoin="round"/>
<polygon points="1256.8,420.5 1264.5,420.5 1265.6,429.0 1273.3,438.9 1271.1,442.2 1263.4,438.9 1253.0,434.5 1255.7,427.9" fill="#5d8056" stroke="#5d8056" stroke-width="1.2" stroke-linejoin="round"/>
<polygon points="1260.1,421.3 1264.0,421.3 1264.5,431.2 1260.1,433.4" fill="#6a7a5a" stroke="#6a7a5a" stroke-width="1.2" stroke-linejoin="round"/>
<polygon points="1280.2,420.8 1284.3,424.1 1294.2,420.5 1301.6,422.9 1301.9,436.7 1295.3,440.0 1285.4,436.7 1281.0,430.1" fill="#5c8a62" stroke="#5c8a62" stroke-width="1.2" stroke-linejoin="round"/>
<polygon points="1287.6,424.6 1300.8,424.6 1300.8,434.5 1293.1,436.7" fill="#6a9a72" stroke="#6a9a72" stroke-width="1.2" stroke-linejoin="round"/>
<rect x="1307.4" y="420.2" width="22.0" height="22.0" fill="#4fa25c"/>
<polygon points="1312.9,424.6 1329.4,427.9 1329.4,435.6 1314.0,435.6" fill="#c2bf6c" stroke="#c2bf6c" stroke-width="1.2" stroke-linejoin="round"/>
<polygon points="1307.4,420.2 1316.2,420.2 1314.0,425.7 1307.4,429.0" fill="#7fae52" stroke="#7fae52" stroke-width="1.2" stroke-linejoin="round"/>
<polygon points="1307.4,437.8 1329.4,436.1 1329.4,440.6 1307.4,441.6" fill="#86d05c" stroke="#86d05c" stroke-width="1.2" stroke-linejoin="round"/>
<polygon points="1316.2,442.0 1329.4,440.0 1329.4,442.2" fill="#141a10" stroke="#141a10" stroke-width="1.2" stroke-linejoin="round"/>
<polygon points="1321.7,420.2 1329.4,420.2 1329.4,426.8" fill="#3c9a62" stroke="#3c9a62" stroke-width="1.2" stroke-linejoin="round"/>
<polygon points="1356.4,420.8 1352.0,420.5 1347.1,426.8 1343.8,429.0 1338.3,432.3 1335.3,438.9 1337.2,441.9 1342.7,436.7 1346.0,431.2 1351.5,429.0 1356.6,423.5" fill="#3e5e18" stroke="#3e5e18" stroke-width="1.2" stroke-linejoin="round"/>
<polygon points="1355.9,421.3 1351.5,422.4 1347.1,429.0 1351.5,427.9" fill="#4f7424" stroke="#4f7424" stroke-width="1.2" stroke-linejoin="round"/>
<rect x="1362.5" y="420.2" width="22.0" height="22.0" fill="#a7c92c"/>
<ellipse cx="1373.5" cy="431.8" rx="5.5" ry="9.3" fill="#4e5416" transform="rotate(0 1373.5 431.8)"/>
<ellipse cx="1374.6" cy="435.6" rx="3.3" ry="4.4" fill="#b8781a" transform="rotate(0 1374.6 435.6)"/>
<ellipse cx="1372.9" cy="427.9" rx="3.1" ry="5.0" fill="#5a8a22" transform="rotate(0 1372.9 427.9)"/>
<polygon points="1362.5,420.2 1366.9,420.2 1365.8,427.9 1362.5,429.0" fill="#d8e87a" stroke="#d8e87a" stroke-width="1.2" stroke-linejoin="round"/>
<polygon points="1380.1,420.2 1384.5,420.2 1384.5,431.2 1381.2,432.3" fill="#c8e060" stroke="#c8e060" stroke-width="1.2" stroke-linejoin="round"/>
<rect x="1390.0" y="420.2" width="22.0" height="22.0" fill="#98aa92"/>
<polygon points="1390.0,420.2 1412.0,420.2 1412.0,427.9 1390.0,431.2" fill="#8aa890" stroke="#8aa890" stroke-width="1.2" stroke-linejoin="round"/>
<polygon points="1390.0,434.5 1398.8,436.7 1390.0,442.2" fill="#b0a088" stroke="#b0a088" stroke-width="1.2" stroke-linejoin="round"/>
<polygon points="1397.7,442.0 1403.2,437.2 1412.0,436.1 1412.0,442.2" fill="#3a6d28" stroke="#3a6d28" stroke-width="1.2" stroke-linejoin="round"/>
<polygon points="1390.0,437.2 1412.0,432.3 1412.0,433.9 1390.0,438.9" fill="#c8d4c8" stroke="#c8d4c8" stroke-width="1.2" stroke-linejoin="round"/>
<polygon points="1417.8,430.1 1425.2,424.6 1431.8,426.8 1439.2,429.0 1438.4,437.8 1430.7,438.9 1423.0,436.7 1418.1,435.1" fill="#1c261e" stroke="#1c261e" stroke-width="1.2" stroke-linejoin="round"/>
<polygon points="1423.0,427.9 1425.2,427.3 1423.0,435.6 1420.8,435.1" fill="#55625a" stroke="#55625a" stroke-width="1.2" stroke-linejoin="round"/>
<polygon points="1428.5,427.9 1430.7,427.9 1428.5,436.7 1426.3,436.7" fill="#4a5850" stroke="#4a5850" stroke-width="1.2" stroke-linejoin="round"/>
<polygon points="1434.0,429.0 1436.2,429.0 1434.0,437.2 1431.8,437.2" fill="#46544a" stroke="#46544a" stroke-width="1.2" stroke-linejoin="round"/>
<polygon points="1446.1,425.7 1452.7,420.8 1460.4,421.3 1465.4,427.9 1467.0,436.7 1465.4,441.9 1461.5,437.8 1458.2,433.4 1451.6,436.1 1445.6,434.5" fill="#3e9a48" stroke="#3e9a48" stroke-width="1.2" stroke-linejoin="round"/>
<polygon points="1458.2,423.5 1463.7,426.8 1466.7,436.7 1465.4,441.6 1461.5,437.2 1459.3,432.3" fill="#6d6c3e" stroke="#6d6c3e" stroke-width="1.2" stroke-linejoin="round"/>
<polygon points="1447.2,427.9 1451.6,424.6 1453.8,433.4 1447.2,433.4" fill="#58b060" stroke="#58b060" stroke-width="1.2" stroke-linejoin="round"/>
<polygon points="1273.3,447.6 1266.7,447.9 1261.2,452.8 1257.9,459.4 1252.7,467.1 1255.7,469.0 1262.3,466.0 1268.9,461.6 1272.2,455.0" fill="#469a26" stroke="#469a26" stroke-width="1.2" stroke-linejoin="round"/>
<polygon points="1272.2,448.4 1265.6,451.7 1260.1,460.5 1266.7,457.2" fill="#3c8a3a" stroke="#3c8a3a" stroke-width="1.2" stroke-linejoin="round"/>
<polygon points="1280.2,447.6 1295.3,447.6 1296.4,450.6 1301.6,448.9 1301.6,451.7 1297.0,453.4 1301.6,455.0 1301.6,457.2 1296.4,458.3 1294.2,464.4 1287.6,466.6 1281.0,469.0" fill="#8a9050" stroke="#8a9050" stroke-width="1.2" stroke-linejoin="round"/>
<polygon points="1282.1,449.5 1293.1,449.5 1293.1,460.5 1283.2,464.9" fill="#97a05e" stroke="#97a05e" stroke-width="1.2" stroke-linejoin="round"/>
<polygon points="1317.3,447.6 1321.7,449.5 1326.1,457.2 1327.2,466.0 1323.9,469.0 1314.0,469.0 1309.6,463.8 1310.7,456.1 1314.0,450.6" fill="#a29c6c" stroke="#a29c6c" stroke-width="1.2" stroke-linejoin="round"/>
<ellipse cx="1318.4" cy="460.5" rx="3.8" ry="6.1" fill="#b8b28c" transform="rotate(0 1318.4 460.5)"/>
<polygon points="1317.3,447.9 1321.7,449.5 1321.7,452.8 1315.1,451.7" fill="#8a9a3a" stroke="#8a9a3a" stroke-width="1.2" stroke-linejoin="round"/>
<polygon points="1356.4,447.6 1350.4,448.4 1343.8,453.9 1339.4,459.4 1336.1,464.9 1337.2,469.0 1342.7,468.2 1348.2,463.8 1353.7,458.3 1356.4,452.8" fill="#2c5a28" stroke="#2c5a28" stroke-width="1.2" stroke-linejoin="round"/>
<polygon points="1355.9,448.4 1349.3,455.0 1343.8,464.9 1349.3,461.6 1354.8,456.1" fill="#4c8c2c" stroke="#4c8c2c" stroke-width="1.2" stroke-linejoin="round"/>
<rect x="1362.5" y="447.3" width="22.0" height="22.0" fill="#a4bf30"/>
<polygon points="1362.5,464.4 1381.2,447.3 1384.5,447.3 1384.5,449.5 1366.9,467.1" fill="#d2d444" stroke="#d2d444" stroke-width="1.2" stroke-linejoin="round"/>
<polygon points="1362.5,466.0 1384.5,463.8 1384.5,469.3 1362.5,469.3" fill="#dcd25a" stroke="#dcd25a" stroke-width="1.2" stroke-linejoin="round"/>
<polygon points="1371.3,460.5 1383.4,452.8 1384.5,461.6 1374.6,464.9" fill="#7fb43a" stroke="#7fb43a" stroke-width="1.2" stroke-linejoin="round"/>
<polygon points="1362.5,447.3 1373.5,447.3 1362.5,458.3" fill="#8fb82a" stroke="#8fb82a" stroke-width="1.2" stroke-linejoin="round"/>
<polygon points="1390.0,447.3 1412.0,447.3 1412.0,459.4 1408.7,469.0 1392.2,469.0 1390.0,466.0" fill="#76694a" stroke="#76694a" stroke-width="1.2" stroke-linejoin="round"/>
<polygon points="1403.2,447.3 1412.0,447.3 1412.0,459.4 1409.2,468.2 1404.3,468.2" fill="#5d8b60" stroke="#5d8b60" stroke-width="1.2" stroke-linejoin="round"/>
<polygon points="1397.2,447.3 1402.1,447.3 1402.1,459.4 1397.7,460.5" fill="#4a3a22" stroke="#4a3a22" stroke-width="1.2" stroke-linejoin="round"/>
<polygon points="1390.0,462.7 1408.7,463.8 1408.2,468.8 1392.2,468.8" fill="#8a8060" stroke="#8a8060" stroke-width="1.2" stroke-linejoin="round"/>
<polygon points="1417.8,447.6 1439.5,447.6 1435.1,453.9 1429.6,460.5 1423.0,464.9 1418.6,469.0" fill="#467e20" stroke="#467e20" stroke-width="1.2" stroke-linejoin="round"/>
<polygon points="1418.6,448.4 1430.7,448.4 1421.9,460.5" fill="#4f8a28" stroke="#4f8a28" stroke-width="1.2" stroke-linejoin="round"/>
<polygon points="1449.4,448.4 1461.5,447.6 1465.4,452.8 1464.8,461.6 1460.4,467.1 1456.0,469.0 1451.6,463.8 1448.3,456.1" fill="#b4c5b8" stroke="#b4c5b8" stroke-width="1.2" stroke-linejoin="round"/>
<polygon points="1450.5,448.9 1458.2,448.4 1457.1,453.9 1450.5,452.8" fill="#8fa69a" stroke="#8fa69a" stroke-width="1.2" stroke-linejoin="round"/>
<polygon points="1457.1,456.1 1463.7,455.0 1461.5,463.8 1457.1,462.7" fill="#c8d6cc" stroke="#c8d6cc" stroke-width="1.2" stroke-linejoin="round"/>
<polygon points="1253.5,475.6 1273.9,475.1 1272.8,485.0 1273.9,493.8 1256.8,495.7 1255.7,487.2" fill="#8a9446" stroke="#8a9446" stroke-width="1.2" stroke-linejoin="round"/>
<polygon points="1260.1,476.2 1266.7,476.2 1267.8,491.6 1260.1,493.8" fill="#9aa456" stroke="#9aa456" stroke-width="1.2" stroke-linejoin="round"/>
<polygon points="1254.6,475.6 1273.3,475.1 1273.3,478.4 1254.6,478.4" fill="#707a32" stroke="#707a32" stroke-width="1.2" stroke-linejoin="round"/>
<polygon points="1280.2,483.9 1285.4,479.5 1286.5,474.6 1289.8,479.5 1294.2,477.3 1297.5,479.5 1300.3,474.3 1301.6,482.8 1301.6,495.7 1294.2,492.7 1287.6,490.5 1281.0,489.9" fill="#6a3e10" stroke="#6a3e10" stroke-width="1.2" stroke-linejoin="round"/>
<polygon points="1286.0,477.3 1289.8,479.5 1294.2,477.9 1297.0,480.1 1294.2,487.2 1288.7,486.1" fill="#ebc88c" stroke="#ebc88c" stroke-width="1.2" stroke-linejoin="round"/>
<polygon points="1298.6,475.1 1301.6,481.7 1301.6,491.6 1298.6,488.3" fill="#3a2408" stroke="#3a2408" stroke-width="1.2" stroke-linejoin="round"/>
<polygon points="1328.9,474.6 1323.9,475.6 1319.5,480.6 1312.9,483.9 1308.0,490.5 1310.7,495.7 1315.1,490.5 1321.7,487.2 1327.2,481.7" fill="#3e7a20" stroke="#3e7a20" stroke-width="1.2" stroke-linejoin="round"/>
<polygon points="1321.7,486.1 1327.2,481.1 1323.9,488.3 1316.2,491.6" fill="#a6d04a" stroke="#a6d04a" stroke-width="1.2" stroke-linejoin="round"/>
<polygon points="1335.3,474.3 1344.9,475.1 1353.7,476.2 1356.6,481.7 1355.9,487.2 1351.5,490.5 1337.2,489.9 1339.4,486.1 1344.9,485.0 1344.9,482.8 1335.5,481.7" fill="#5c9a6e" stroke="#5c9a6e" stroke-width="1.2" stroke-linejoin="round"/>
<polygon points="1335.3,474.3 1344.9,475.1 1348.2,478.4 1335.5,480.6" fill="#2e6a48" stroke="#2e6a48" stroke-width="1.2" stroke-linejoin="round"/>
<polygon points="1337.2,489.6 1339.9,486.3 1348.2,486.1 1351.5,490.3" fill="#4e8a3a" stroke="#4e8a3a" stroke-width="1.2" stroke-linejoin="round"/>
<polygon points="1364.7,480.6 1368.0,480.1 1370.2,481.7 1373.5,480.1 1376.8,481.7 1380.1,480.6 1383.9,482.8 1383.9,493.8 1375.7,495.7 1366.9,494.9 1362.8,490.5" fill="#2c6a28" stroke="#2c6a28" stroke-width="1.2" stroke-linejoin="round"/>
<polygon points="1369.1,481.7 1371.3,481.7 1370.2,494.9 1368.0,494.4" fill="#1c4a1c" stroke="#1c4a1c" stroke-width="1.2" stroke-linejoin="round"/>
<polygon points="1375.7,481.7 1377.9,481.7 1376.8,494.9 1374.6,494.9" fill="#1c4a1c" stroke="#1c4a1c" stroke-width="1.2" stroke-linejoin="round"/>
<polygon points="1379.5,481.7 1383.4,483.4 1383.4,492.7 1379.0,494.4" fill="#3c8230" stroke="#3c8230" stroke-width="1.2" stroke-linejoin="round"/>
<polygon points="1390.3,482.8 1404.3,475.1 1411.7,474.3 1411.7,487.2 1404.3,493.8 1390.3,495.7" fill="#7fb080" stroke="#7fb080" stroke-width="1.2" stroke-linejoin="round"/>
<polygon points="1390.3,490.5 1402.1,485.0 1411.7,483.9 1411.7,487.2 1404.3,493.8 1390.3,495.7" fill="#a6a6b0" stroke="#a6a6b0" stroke-width="1.2" stroke-linejoin="round"/>
<polygon points="1395.5,485.0 1404.3,481.7 1404.3,486.1 1394.4,489.9" fill="#a8b060" stroke="#a8b060" stroke-width="1.2" stroke-linejoin="round"/>
<polygon points="1391.1,474.6 1392.2,474.3 1396.0,479.5 1395.0,480.1" fill="#5a6a5a" stroke="#5a6a5a" stroke-width="1.2" stroke-linejoin="round"/>
<polygon points="1418.1,474.3 1429.6,474.6 1431.8,479.5 1436.8,495.7 1430.7,490.5 1424.1,482.8 1417.8,477.3" fill="#7a9a2e" stroke="#7a9a2e" stroke-width="1.2" stroke-linejoin="round"/>
<polygon points="1418.1,474.3 1424.1,474.6 1431.8,490.5 1436.8,495.7 1430.7,490.5 1424.1,482.8 1417.8,477.3" fill="#5e6a1c" stroke="#5e6a1c" stroke-width="1.2" stroke-linejoin="round"/>
<polygon points="1445.4,481.7 1453.8,479.5 1461.5,475.6 1464.8,476.2 1466.7,490.5 1466.7,494.4 1462.6,493.2 1459.3,494.4 1456.0,492.7 1451.6,493.8 1448.3,492.7 1445.4,494.4" fill="#3f8a76" stroke="#3f8a76" stroke-width="1.2" stroke-linejoin="round"/>
<polygon points="1445.4,481.7 1451.6,480.1 1452.7,492.7 1445.4,493.8" fill="#3a7a5a" stroke="#3a7a5a" stroke-width="1.2" stroke-linejoin="round"/>
<polygon points="1456.0,478.4 1463.7,476.2 1463.7,486.1 1456.0,487.2" fill="#36988a" stroke="#36988a" stroke-width="1.2" stroke-linejoin="round"/>
<polygon points="1463.7,488.3 1466.5,487.2 1466.5,491.6 1463.7,492.7" fill="#b8a0a8" stroke="#b8a0a8" stroke-width="1.2" stroke-linejoin="round"/>
<polygon points="1252.7,501.7 1260.1,501.2 1265.6,506.1 1270.0,511.6 1274.1,517.1 1273.3,522.1 1268.9,521.5 1261.2,514.9 1255.7,508.3" fill="#a0b4a2" stroke="#a0b4a2" stroke-width="1.2" stroke-linejoin="round"/>
<polygon points="1254.6,502.8 1261.2,502.8 1270.0,513.8 1265.6,514.9" fill="#8aa090" stroke="#8aa090" stroke-width="1.2" stroke-linejoin="round"/>
<rect x="1279.9" y="500.6" width="22.0" height="22.0" fill="#98b49a"/>
<polygon points="1294.2,507.2 1301.9,505.0 1301.9,518.2 1296.4,522.6 1292.0,522.6" fill="#b0a080" stroke="#b0a080" stroke-width="1.2" stroke-linejoin="round"/>
<polygon points="1288.7,500.6 1297.5,500.6 1296.4,502.8 1289.8,502.2" fill="#1e3a1e" stroke="#1e3a1e" stroke-width="1.2" stroke-linejoin="round"/>
<polygon points="1279.9,520.4 1301.9,519.3 1301.9,522.6 1279.9,522.6" fill="#8a9a62" stroke="#8a9a62" stroke-width="1.2" stroke-linejoin="round"/>
<polygon points="1299.7,512.7 1301.9,511.6 1301.9,521.5 1300.3,521.5" fill="#2f5a22" stroke="#2f5a22" stroke-width="1.2" stroke-linejoin="round"/>
<polygon points="1281.0,501.7 1287.6,501.7 1289.8,518.2 1282.1,519.3" fill="#a8c0aa" stroke="#a8c0aa" stroke-width="1.2" stroke-linejoin="round"/>
<polygon points="1307.8,500.9 1329.1,500.9 1329.1,521.5 1323.9,522.3 1319.5,519.3 1315.1,514.9 1310.7,507.2" fill="#5a9a26" stroke="#5a9a26" stroke-width="1.2" stroke-linejoin="round"/>
<polygon points="1318.4,512.7 1329.1,509.4 1329.1,521.5 1323.9,522.3 1319.5,519.3" fill="#4c7c30" stroke="#4c7c30" stroke-width="1.2" stroke-linejoin="round"/>
<polygon points="1309.6,501.7 1323.9,501.7 1321.7,508.3 1312.9,507.2" fill="#6aa82c" stroke="#6aa82c" stroke-width="1.2" stroke-linejoin="round"/>
<polygon points="1338.3,500.9 1342.7,501.7 1348.2,507.2 1353.7,513.8 1355.3,519.3 1352.6,521.0 1347.1,516.0 1341.6,509.4" fill="#48882a" stroke="#48882a" stroke-width="1.2" stroke-linejoin="round"/>
<polygon points="1340.5,502.8 1346.0,507.2 1351.5,514.9 1347.1,513.8" fill="#5a9a30" stroke="#5a9a30" stroke-width="1.2" stroke-linejoin="round"/>
<polygon points="1362.8,502.8 1366.9,500.9 1375.7,507.2 1379.0,501.7 1383.9,502.8 1383.9,510.5 1379.0,514.9 1372.4,518.2 1368.0,522.3 1364.7,516.0" fill="#c29a30" stroke="#c29a30" stroke-width="1.2" stroke-linejoin="round"/>
<polygon points="1376.8,505.0 1379.5,501.7 1383.9,502.8 1383.9,510.5 1379.0,514.9" fill="#5c5a28" stroke="#5c5a28" stroke-width="1.2" stroke-linejoin="round"/>
<polygon points="1365.8,500.9 1367.4,500.9 1378.4,514.9 1376.8,516.0" fill="#f4f0e8" stroke="#f4f0e8" stroke-width="1.2" stroke-linejoin="round"/>
<polygon points="1366.9,501.2 1369.1,500.9 1376.2,506.7 1374.6,507.8" fill="#4a5a3a" stroke="#4a5a3a" stroke-width="1.2" stroke-linejoin="round"/>
<polygon points="1363.6,508.3 1371.3,513.8 1368.0,521.5" fill="#b08a28" stroke="#b08a28" stroke-width="1.2" stroke-linejoin="round"/>
<polygon points="1390.3,500.9 1398.8,500.9 1404.3,505.0 1410.3,512.7 1406.5,517.1 1402.1,521.5 1396.6,522.3 1390.3,518.2" fill="#68a626" stroke="#68a626" stroke-width="1.2" stroke-linejoin="round"/>
<polygon points="1391.1,508.3 1397.7,507.2 1399.9,512.7 1395.5,517.1 1391.1,516.0" fill="#e8e0c2" stroke="#e8e0c2" stroke-width="1.2" stroke-linejoin="round"/>
<polygon points="1390.5,506.7 1397.7,506.1 1397.7,508.3 1390.5,508.9" fill="#3a5a1a" stroke="#3a5a1a" stroke-width="1.2" stroke-linejoin="round"/>
<polygon points="1398.8,511.6 1404.3,513.8 1402.1,517.1 1397.7,516.0" fill="#4a381a" stroke="#4a381a" stroke-width="1.2" stroke-linejoin="round"/>
<polygon points="1391.1,501.2 1398.8,501.2 1403.2,505.0 1391.1,505.0" fill="#4f8a1e" stroke="#4f8a1e" stroke-width="1.2" stroke-linejoin="round"/>
</g>
<text x="1257.6" y="392.9" font-family="Liberation Sans" font-size="3.500" fill="#555" textLength="11.7" lengthAdjust="spacingAndGlyphs">Healthy</text>
<text x="1273.4" y="392.9" font-family="Liberation Sans" font-size="3.500" fill="#555" textLength="35.0" lengthAdjust="spacingAndGlyphs">Black sigatoka disease</text>
<text x="1312.6" y="392.9" font-family="Liberation Sans" font-size="3.500" fill="#555" textLength="11.7" lengthAdjust="spacingAndGlyphs">Healthy</text>
<text x="1340.1" y="392.9" font-family="Liberation Sans" font-size="3.500" fill="#555" textLength="11.7" lengthAdjust="spacingAndGlyphs">Healthy</text>
<text x="1367.6" y="392.9" font-family="Liberation Sans" font-size="3.500" fill="#555" textLength="11.7" lengthAdjust="spacingAndGlyphs">Healthy</text>
<text x="1395.2" y="392.9" font-family="Liberation Sans" font-size="3.500" fill="#555" textLength="11.7" lengthAdjust="spacingAndGlyphs">Healthy</text>
<text x="1422.7" y="392.9" font-family="Liberation Sans" font-size="3.500" fill="#555" textLength="11.7" lengthAdjust="spacingAndGlyphs">Healthy</text>
<text x="1438.5" y="392.9" font-family="Liberation Sans" font-size="3.500" fill="#555" textLength="35.0" lengthAdjust="spacingAndGlyphs">Black sigatoka disease</text>
<text x="1257.6" y="419.2" font-family="Liberation Sans" font-size="3.500" fill="#555" textLength="11.7" lengthAdjust="spacingAndGlyphs">Healthy</text>
<text x="1285.1" y="419.2" font-family="Liberation Sans" font-size="3.500" fill="#555" textLength="11.7" lengthAdjust="spacingAndGlyphs">Healthy</text>
<text x="1300.9" y="419.2" font-family="Liberation Sans" font-size="3.500" fill="#555" textLength="35.0" lengthAdjust="spacingAndGlyphs">Black sigatoka disease</text>
<text x="1340.1" y="419.2" font-family="Liberation Sans" font-size="3.500" fill="#555" textLength="11.7" lengthAdjust="spacingAndGlyphs">Healthy</text>
<text x="1356.0" y="419.2" font-family="Liberation Sans" font-size="3.500" fill="#555" textLength="35.0" lengthAdjust="spacingAndGlyphs">Black sigatoka disease</text>
<text x="1383.5" y="419.2" font-family="Liberation Sans" font-size="3.500" fill="#555" textLength="35.0" lengthAdjust="spacingAndGlyphs">Black sigatoka disease</text>
<text x="1412.0" y="419.2" font-family="Liberation Sans" font-size="3.500" fill="#555" textLength="33.0" lengthAdjust="spacingAndGlyphs">Banana Bacterial Wilt</text>
<text x="1439.5" y="419.2" font-family="Liberation Sans" font-size="3.500" fill="#555" textLength="33.0" lengthAdjust="spacingAndGlyphs">Banana Bacterial Wilt</text>
<text x="1257.6" y="445.9" font-family="Liberation Sans" font-size="3.500" fill="#555" textLength="11.7" lengthAdjust="spacingAndGlyphs">Healthy</text>
<text x="1274.4" y="445.9" font-family="Liberation Sans" font-size="3.500" fill="#555" textLength="33.0" lengthAdjust="spacingAndGlyphs">Banana Bacterial Wilt</text>
<text x="1301.9" y="445.9" font-family="Liberation Sans" font-size="3.500" fill="#555" textLength="33.0" lengthAdjust="spacingAndGlyphs">Banana Bacterial Wilt</text>
<text x="1340.1" y="445.9" font-family="Liberation Sans" font-size="3.500" fill="#555" textLength="11.7" lengthAdjust="spacingAndGlyphs">Healthy</text>
<text x="1357.0" y="445.9" font-family="Liberation Sans" font-size="3.500" fill="#555" textLength="33.0" lengthAdjust="spacingAndGlyphs">Banana Bacterial Wilt</text>
<text x="1383.5" y="445.9" font-family="Liberation Sans" font-size="3.500" fill="#555" textLength="35.0" lengthAdjust="spacingAndGlyphs">Black sigatoka disease</text>
<text x="1422.7" y="445.9" font-family="Liberation Sans" font-size="3.500" fill="#555" textLength="11.7" lengthAdjust="spacingAndGlyphs">Healthy</text>
<text x="1450.2" y="445.9" font-family="Liberation Sans" font-size="3.500" fill="#555" textLength="11.7" lengthAdjust="spacingAndGlyphs">Healthy</text>
<text x="1246.9" y="472.5" font-family="Liberation Sans" font-size="3.500" fill="#555" textLength="33.0" lengthAdjust="spacingAndGlyphs">Banana Bacterial Wilt</text>
<text x="1274.4" y="472.5" font-family="Liberation Sans" font-size="3.500" fill="#555" textLength="33.0" lengthAdjust="spacingAndGlyphs">Banana Bacterial Wilt</text>
<text x="1312.6" y="472.5" font-family="Liberation Sans" font-size="3.500" fill="#555" textLength="11.7" lengthAdjust="spacingAndGlyphs">Healthy</text>
<text x="1329.5" y="472.5" font-family="Liberation Sans" font-size="3.500" fill="#555" textLength="33.0" lengthAdjust="spacingAndGlyphs">Banana Bacterial Wilt</text>
<text x="1357.0" y="472.5" font-family="Liberation Sans" font-size="3.500" fill="#555" textLength="33.0" lengthAdjust="spacingAndGlyphs">Banana Bacterial Wilt</text>
<text x="1383.5" y="472.5" font-family="Liberation Sans" font-size="3.500" fill="#555" textLength="35.0" lengthAdjust="spacingAndGlyphs">Black sigatoka disease</text>
<text x="1412.0" y="472.5" font-family="Liberation Sans" font-size="3.500" fill="#555" textLength="33.0" lengthAdjust="spacingAndGlyphs">Banana Bacterial Wilt</text>
<text x="1438.5" y="472.5" font-family="Liberation Sans" font-size="3.500" fill="#555" textLength="35.0" lengthAdjust="spacingAndGlyphs">Black sigatoka disease</text>
<text x="1257.6" y="499.3" font-family="Liberation Sans" font-size="3.500" fill="#555" textLength="11.7" lengthAdjust="spacingAndGlyphs">Healthy</text>
<text x="1273.4" y="499.3" font-family="Liberation Sans" font-size="3.500" fill="#555" textLength="35.0" lengthAdjust="spacingAndGlyphs">Black sigatoka disease</text>
<text x="1312.6" y="499.3" font-family="Liberation Sans" font-size="3.500" fill="#555" textLength="11.7" lengthAdjust="spacingAndGlyphs">Healthy</text>
<text x="1340.1" y="499.3" font-family="Liberation Sans" font-size="3.500" fill="#555" textLength="11.7" lengthAdjust="spacingAndGlyphs">Healthy</text>
<text x="1357.0" y="499.3" font-family="Liberation Sans" font-size="3.500" fill="#555" textLength="33.0" lengthAdjust="spacingAndGlyphs">Banana Bacterial Wilt</text>
<text x="1383.5" y="499.3" font-family="Liberation Sans" font-size="3.500" fill="#555" textLength="35.0" lengthAdjust="spacingAndGlyphs">Black sigatoka disease</text>
</g>
<path d="M1483.500 394L1488 391 L1492.500 394Z" fill="none"/>
<path d="M1483.300 397.500L1488 393L1492.700 397.500Z" fill="#33414c"/><path d="M1483.300 750.800L1488 755.300L1492.700 750.800Z" fill="#33414c"/>
<rect x="1482.300" y="402.500" width="11.400" height="342" rx="5" fill="none" stroke="#2b3843" stroke-width="1"/>
<rect x="1483.200" y="465.300" width="9.600" height="278.300" rx="4.800" fill="#6d7882"/>
<rect x="1232" y="570.500" width="1.200" height="7" fill="#1f2a34"/>
<path d="M1281.9 616.9L1281.9 634.4L1285.9 630.6L1288.9 637.2L1291.5 636.0L1288.6 629.6L1294.0 629.6Z" fill="#fdfdfd" stroke="#3c3c3c" stroke-width="1.300" stroke-linejoin="round"/>
</svg>
</body>
</html>
